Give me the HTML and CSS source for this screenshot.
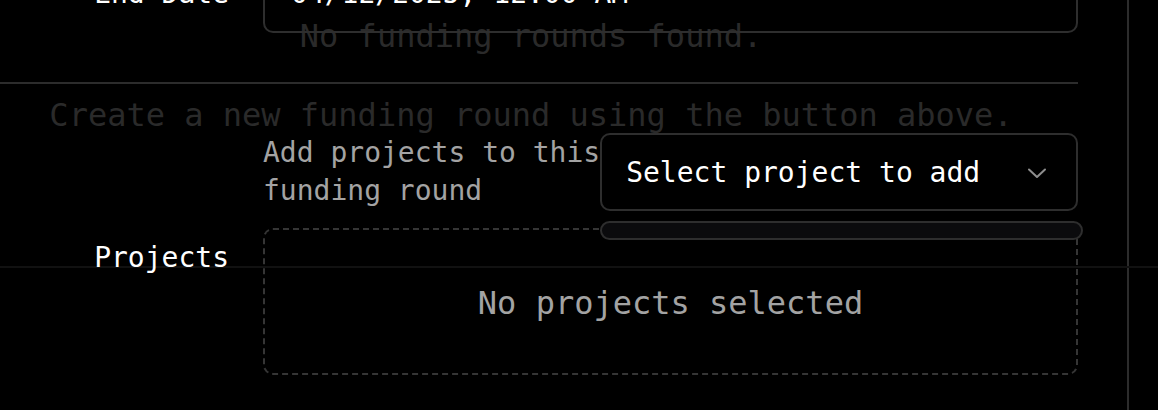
FILE: index.html
```html
<!DOCTYPE html>
<html lang="en">
<head>
<meta charset="utf-8">
<title>Funding round</title>
<link rel="stylesheet" href="styles.css">
</head>
<body>
<div class="page">
  <div class="main">
    <p class="empty-title">No funding rounds found.</p>
    <div class="rule"></div>
    <p class="empty-hint">Create a new funding round using the button above.</p>
    <div class="faint-rule"></div>
  </div>
  <div class="side"></div>

  <form class="form">
    <div class="row row-date">
      <label class="label">End Date</label>
      <div class="input">04/12/2025, 12:00 AM</div>
    </div>
    <div class="row row-add">
      <div class="label"></div>
      <div class="add">
        <p class="add-text">Add projects to this<br>funding round</p>
        <div class="select-wrap">
          <div class="select">
            <span>Select project to add</span>
            <svg class="chev" width="20" height="12" viewBox="0 0 20 12"><path d="M2 2.5 10 10l8-7.5" fill="none" stroke="#8e8e8e" stroke-width="2" stroke-linecap="round" stroke-linejoin="round"/></svg>
          </div>
          <div class="popover"></div>
        </div>
      </div>
    </div>
    <div class="row row-projects">
      <label class="label label-top">Projects</label>
      <div class="dropzone">No projects selected</div>
    </div>
  </form>
</div>
</body>
</html>
```
FILE: styles.css
```css
* { box-sizing: border-box; }
html, body {
  margin: 0;
  padding: 0;
  background: #000;
  width: 1158px;
  height: 410px;
  overflow: hidden;
}
body {
  font-family: "DejaVu Sans Mono", "Liberation Mono", monospace;
  color: #fff;
}
.page {
  position: relative;
  display: flex;
  height: 410px;
}
.main {
  width: 1078px;
  flex: none;
}
.side {
  margin-left: 49px;
  width: 2px;
  background: #2c2c2c;
  height: 410px;
}
.empty-title,
.empty-hint {
  margin: 0;
  width: 1062px;
  text-align: center;
  font-size: 32px;
  line-height: 48px;
  color: #2a2a2a;
}
.empty-title {
  padding-top: 12px;
}
.rule {
  margin-top: 22px;
  height: 2px;
  background: #2c2c2c;
}
.empty-hint {
  margin-top: 7px;
}
.faint-rule {
  position: absolute;
  left: 0;
  right: 0;
  top: 266px;
  height: 2px;
  background: #111;
}

/* form overlay */
.form {
  position: absolute;
  top: -45px;
  left: 0;
  width: 1078px;
  display: flex;
  flex-direction: column;
}
.row {
  display: flex;
  gap: 34px;
}
.label {
  width: 229px;
  flex: none;
  text-align: right;
  font-size: 28px;
  line-height: 78px;
  color: #fff;
}
.label-top {
  line-height: 38px;
  padding-top: 11px;
}
.input {
  flex: 1;
  height: 78px;
  border: 2px solid #2e2e2e;
  border-radius: 10px;
  padding: 0 26px;
  font-size: 28px;
  line-height: 74px;
  color: #fff;
}
.row-add {
  margin-top: 100px;
}
.add {
  flex: 1;
  display: flex;
  justify-content: space-between;
}
.add-text {
  margin: 1px 0 0;
  font-size: 28px;
  line-height: 38px;
  color: #a3a3a3;
  white-space: nowrap;
}
.select-wrap {
  position: relative;
  width: 478px;
}
.select {
  height: 78px;
  border: 2px solid #2e2e2e;
  border-radius: 10px;
  padding: 0 29px 0 24px;
  display: flex;
  align-items: center;
  justify-content: space-between;
  font-size: 28px;
  color: #fff;
}
.chev {
  display: block;
  margin-top: 1px;
}
.popover {
  position: absolute;
  left: 0;
  top: 88px;
  width: 483px;
  height: 19px;
  background: #0b0b0d;
  border: 2px solid #2e2e2e;
  border-radius: 10px;
  z-index: 2;
}
.row-projects {
  margin-top: 17px;
}
.dropzone {
  flex: 1;
  height: 147px;
  border: 2px dashed #353535;
  border-radius: 10px;
  display: flex;
  align-items: center;
  justify-content: center;
  padding-top: 3px;
  font-size: 32px;
  color: #a3a3a3;
}
```
